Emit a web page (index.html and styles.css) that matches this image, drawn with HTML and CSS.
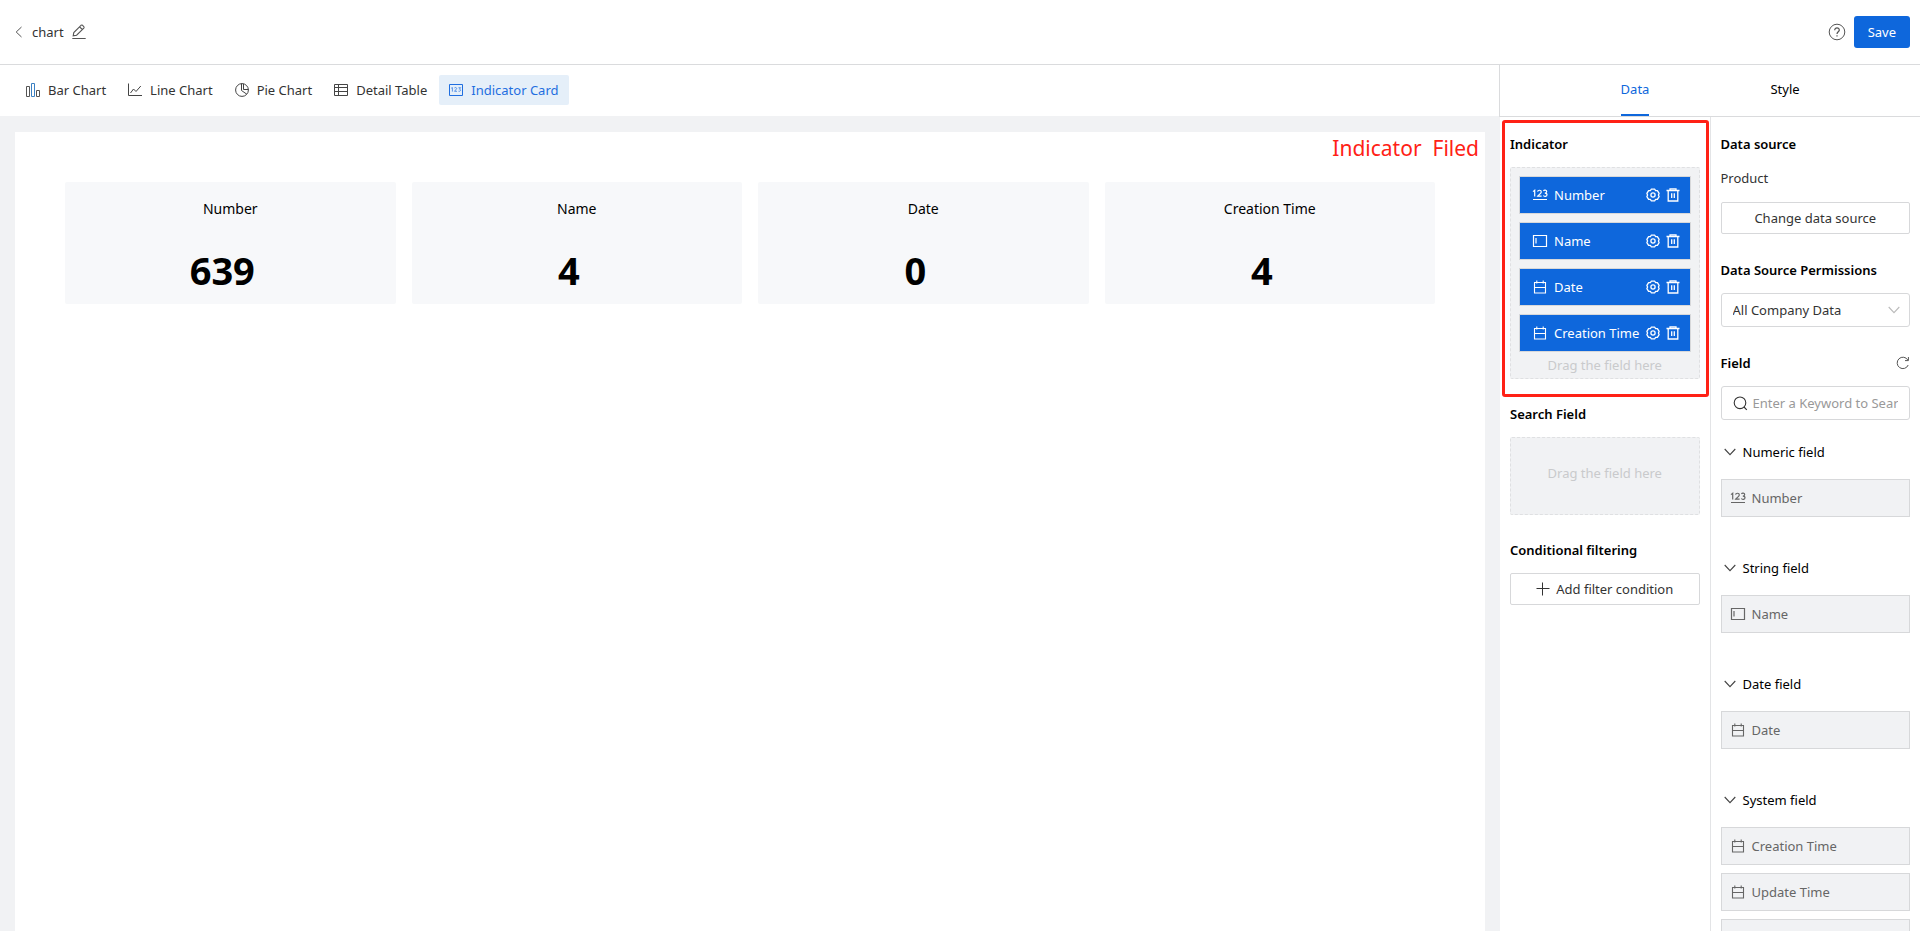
FILE: index.html
```html
<!DOCTYPE html>
<html lang="en">
<head>
    <meta charset="UTF-8">
    <meta name="viewport" content="width=device-width, initial-scale=1.0">
    <title>chart</title>
    <link rel="stylesheet" href="styles.css">
</head>
<body>

    <!-- Shared icons -->
    <svg class="icon-defs" aria-hidden="true">
        <symbol id="icon-number" viewBox="0 0 16 14">
            <path d="M1 3.6 2.7 2.2V8.4M5.6 3.6C5.8 1.8 9.3 1.7 9.3 3.9 9.3 5.4 7 6.4 5.7 8.2H9.6M11.4 2.8C12.2 1.8 14.7 1.9 14.7 3.6 14.7 4.8 13.6 5.1 12.8 5.1 13.8 5.1 15 5.4 15 6.7 15 8.6 12.2 8.8 11.3 7.5" fill="none" stroke="currentColor" stroke-width="1.2"/>
            <path d="M1 11.5H15" stroke="currentColor"/>
        </symbol>
        <symbol id="icon-text" viewBox="0 0 16 14">
            <path d="M1.5 1.5H14.5V12.5H1.5ZM4 4V9.5" fill="none" stroke="currentColor" stroke-width="1.2"/>
        </symbol>
        <symbol id="icon-date" viewBox="0 0 16 14">
            <path d="M2.5 2.5H13.5V13H2.5ZM2.5 7.5H13.5M4.8 .5V3.5M11.2 .5V3.5" fill="none" stroke="currentColor" stroke-width="1.1"/>
        </symbol>
        <symbol id="icon-gear" viewBox="0 0 14 14">
            <path d="M5.2 1.2H8.8L9.6 2.7 11.4 2.6 13.1 5.4 12.4 7 13.1 8.6 11.4 11.4 9.6 11.3 8.8 12.8H5.2L4.4 11.3 2.6 11.4.9 8.6 1.6 7 .9 5.4 2.6 2.6 4.4 2.7Z" fill="none" stroke="currentColor" stroke-width="1.3" stroke-linejoin="round"/>
            <circle cx="7" cy="7" r="2.1" fill="none" stroke="currentColor" stroke-width="1.3"/>
        </symbol>
        <symbol id="icon-trash" viewBox="0 0 14 14">
            <path d="M.5 2.5H13.5M4 2.2V.9H10V2.2M2.2 2.5V13H11.8V2.5M5.7 5.2V10M8.3 5.2V10" fill="none" stroke="currentColor" stroke-width="1.3"/>
        </symbol>
        <symbol id="icon-down" viewBox="0 0 12 12">
            <path d="M.7 3 6 8.6 11.3 3" fill="none" stroke="currentColor" stroke-width="1.1"/>
        </symbol>
    </svg>

    <header class="header">
        <button class="icon-btn back" aria-label="Back">
            <svg width="8" height="12" viewBox="0 0 8 12"><path d="M6.5 1 1.2 6 6.5 11" fill="none" stroke="currentColor"/></svg>
        </button>
        <h1 class="title">chart</h1>
        <button class="icon-btn" aria-label="Rename">
            <svg width="14" height="16" viewBox="0 0 14 16"><path d="M1.2 11.8 1.8 8.5 9 1.3Q9.8.7 10.6 1.3L11.8 2.5Q12.4 3.3 11.8 4.1L4.6 11.2ZM7.6 2.8 10.3 5.5" fill="none" stroke="currentColor" stroke-width="1.1"/><path d="M.3 14.5H13.7" stroke="currentColor"/></svg>
        </button>
        <div class="header-actions">
            <button class="icon-btn" aria-label="Help">
                <svg width="18" height="18" viewBox="0 0 18 18" fill="none" stroke="currentColor"><circle cx="9" cy="9" r="7.8"/><path d="M6.7 7.2C6.7 4.1 11.4 4.3 11.3 7.1 11.2 8.8 9 8.8 9 11M9 12.2V13.5" stroke-width="1.2"/></svg>
            </button>
            <button class="save">Save</button>
        </div>
    </header>

    <div class="workspace">
        <main class="main">
            <nav class="toolbar">
                <button class="tool">
                    <svg width="14" height="14" viewBox="0 0 14 14" fill="none"><path d="M.5 3.5H3.5V13.5H.5Z" stroke="#555"/><path d="M5.5.5H8.5V13.5H5.5Z" stroke="#3c82c4"/><path d="M10.5 7.5H13.5V13.5H10.5Z" stroke="#555"/></svg>
                    Bar Chart
                </button>
                <button class="tool">
                    <svg width="14" height="14" viewBox="0 0 14 14" fill="none" stroke="#444"><path d="M.5.5V12.5H14M2.5 10 5.5 6 8 8.5 12.8 3"/></svg>
                    Line Chart
                </button>
                <button class="tool">
                    <svg width="14" height="14" viewBox="0 0 14 14" fill="none" stroke="#444"><circle cx="7" cy="7" r="6.4"/><path d="M6.5.6V7.5L11.8 11.2M8.5.8V6.5H13.4"/></svg>
                    Pie Chart
                </button>
                <button class="tool">
                    <svg width="14" height="14" viewBox="0 0 14 14" fill="none" stroke="#444"><path d="M.5 1.5H13.5V12.5H.5ZM.5 4.5H13.5M.5 8.5H13.5M4.5 1.5V12.5"/></svg>
                    Detail Table
                </button>
                <button class="tool active">
                    <svg width="14" height="14" viewBox="0 0 14 14" fill="none" stroke="currentColor"><path d="M.5 1.5H13.5V12.5H.5Z"/><path d="M2.2 5.2 3.4 4.6V8.6M5.4 5C6 4.2 7.7 4.4 7.7 5.6L5.5 8.3H8M9.5 4.7H11.7L10.4 6.1C12.3 6.4 11.8 8.8 9.5 8.2" stroke-width=".7"/></svg>
                    Indicator Card
                </button>
            </nav>
            <div class="stage">
                <div class="canvas">
                    <div class="note">Indicator&nbsp; Filed</div>
                    <section class="card">
                        <h2>Number</h2>
                        <p>639</p>
                    </section>
                    <section class="card">
                        <h2>Name</h2>
                        <p>4</p>
                    </section>
                    <section class="card">
                        <h2>Date</h2>
                        <p>0</p>
                    </section>
                    <section class="card">
                        <h2>Creation Time</h2>
                        <p>4</p>
                    </section>
                </div>
            </div>
        </main>

        <aside class="side">
            <div class="tabs">
                <button class="tab active"><span>Data</span></button>
                <button class="tab"><span>Style</span></button>
            </div>
            <div class="columns">
                <div class="column config">
                    <div class="highlight"></div>
                    <h3>Indicator</h3>
                    <div class="dropzone">
                        <div class="field chosen">
                            <svg class="field-icon"><use href="#icon-number"/></svg>
                            <span>Number</span>
                            <button aria-label="Settings"><svg><use href="#icon-gear"/></svg></button>
                            <button aria-label="Delete"><svg><use href="#icon-trash"/></svg></button>
                        </div>
                        <div class="field chosen">
                            <svg class="field-icon"><use href="#icon-text"/></svg>
                            <span>Name</span>
                            <button aria-label="Settings"><svg><use href="#icon-gear"/></svg></button>
                            <button aria-label="Delete"><svg><use href="#icon-trash"/></svg></button>
                        </div>
                        <div class="field chosen">
                            <svg class="field-icon"><use href="#icon-date"/></svg>
                            <span>Date</span>
                            <button aria-label="Settings"><svg><use href="#icon-gear"/></svg></button>
                            <button aria-label="Delete"><svg><use href="#icon-trash"/></svg></button>
                        </div>
                        <div class="field chosen">
                            <svg class="field-icon"><use href="#icon-date"/></svg>
                            <span>Creation Time</span>
                            <button aria-label="Settings"><svg><use href="#icon-gear"/></svg></button>
                            <button aria-label="Delete"><svg><use href="#icon-trash"/></svg></button>
                        </div>
                        <div class="hint">Drag the field here</div>
                    </div>

                    <h3>Search Field</h3>
                    <div class="dropzone empty">
                        <div class="hint">Drag the field here</div>
                    </div>

                    <h3>Conditional filtering</h3>
                    <button class="btn">
                        <svg width="14" height="14" viewBox="0 0 14 14" stroke="currentColor"><path d="M.5 6.5H13.5M6.5.5V13.5"/></svg>
                        Add filter condition
                    </button>
                </div>

                <div class="column source">
                    <h3>Data source</h3>
                    <p class="source-name">Product</p>
                    <button class="btn">Change data source</button>

                    <h3><label for="permission">Data Source Permissions</label></h3>
                    <div class="select">
                        <select id="permission">
                            <option>All Company Data</option>
                        </select>
                        <svg><use href="#icon-down"/></svg>
                    </div>

                    <h3 class="with-action">
                        <label for="keyword">Field</label>
                        <button class="icon-btn" aria-label="Refresh">
                            <svg width="14" height="14" viewBox="0 0 14 14" fill="none" stroke="currentColor"><path d="M12.2 9A5.7 5.7 0 1 1 11.8 4M12.4 1V4.6H9"/></svg>
                        </button>
                    </h3>
                    <div class="search">
                        <svg width="15" height="15" viewBox="0 0 15 15" fill="none" stroke="currentColor" stroke-width="1.1"><circle cx="7" cy="6.8" r="5.8"/><path d="M11 11 13.8 13.8"/></svg>
                        <input id="keyword" type="text" placeholder="Enter a Keyword to Search">
                    </div>

                    <div class="group">
                        <h4><svg><use href="#icon-down"/></svg>Numeric field</h4>
                        <div class="field"><svg class="field-icon"><use href="#icon-number"/></svg><span>Number</span></div>
                    </div>
                    <div class="group">
                        <h4><svg><use href="#icon-down"/></svg>String field</h4>
                        <div class="field"><svg class="field-icon"><use href="#icon-text"/></svg><span>Name</span></div>
                    </div>
                    <div class="group">
                        <h4><svg><use href="#icon-down"/></svg>Date field</h4>
                        <div class="field"><svg class="field-icon"><use href="#icon-date"/></svg><span>Date</span></div>
                    </div>
                    <div class="group">
                        <h4><svg><use href="#icon-down"/></svg>System field</h4>
                        <div class="field"><svg class="field-icon"><use href="#icon-date"/></svg><span>Creation Time</span></div>
                        <div class="field"><svg class="field-icon"><use href="#icon-date"/></svg><span>Update Time</span></div>
                        <div class="field"></div>
                    </div>
                </div>
            </div>
        </aside>
    </div>

</body>
</html>
```

FILE: styles.css
```css
* {
    box-sizing: border-box;
}

body {
    display: flex;
    flex-direction: column;
    height: 100vh;
    margin: 0;
    overflow: hidden;
    background-color: #fff;
    color: #333;
    font-family: "Noto Sans", "Open Sans", sans-serif;
    font-size: 13px;
    line-height: 22px;
}

h1, h2, h3, h4, p {
    margin: 0;
    font-size: 13px;
    font-weight: 400;
}

button, input, select {
    font: inherit;
    color: inherit;
}

button {
    padding: 0;
    border: none;
    background: none;
    cursor: pointer;
}

svg {
    display: block;
    flex-shrink: 0;
}

.icon-defs {
    display: none;
}

.icon-btn {
    color: #555;
}

/* Header */
.header {
    display: flex;
    align-items: center;
    flex-shrink: 0;
    height: 65px;
    padding: 0 10px 0 15px;
    border-bottom: 1px solid #dadbdd;
}

.title {
    margin: 0 8px 0 9px;
}

.header-actions {
    display: flex;
    align-items: center;
    gap: 8px;
    margin-left: auto;
}

.save {
    height: 32px;
    padding: 0 14px;
    border-radius: 3px;
    background-color: #0e67dc;
    color: #fff;
}

.workspace {
    display: flex;
    flex: 1;
    min-height: 0;
}

.main {
    display: flex;
    flex: 1;
    flex-direction: column;
    min-width: 0;
}

/* Chart type toolbar */
.toolbar {
    display: flex;
    align-items: center;
    gap: 2px;
    height: 51px;
    padding: 0 16px 2px;
}

.tool {
    display: flex;
    align-items: center;
    gap: 8px;
    height: 30px;
    padding: 0 10px;
    border-radius: 2px;
}

.tool.active {
    background-color: #e5eff9;
    color: #1f6ee0;
}

/* Canvas */
.stage {
    display: flex;
    flex: 1;
    padding: 16px 15px 0;
    background-color: #f1f2f4;
}

.canvas {
    position: relative;
    display: flex;
    align-items: flex-start;
    flex: 1;
    gap: 16px;
    padding: 50px;
    background-color: #fff;
}

.note {
    position: absolute;
    top: 0;
    right: 6px;
    color: #ff2116;
    font-size: 21px;
    line-height: 32px;
}

.card {
    flex: 1;
    height: 122px;
    padding-top: 16px;
    border-radius: 2px;
    background-color: #f7f8fa;
    color: #000;
    text-align: center;
}

.card h2 {
    font-size: 14px;
}

.card p {
    padding-right: 16px;
    margin-top: 24px;
    font-size: 38px;
    font-weight: 700;
    line-height: 52px;
}

/* Side panel */
.side {
    display: flex;
    flex-direction: column;
    width: 420px;
}

.tabs {
    display: flex;
    justify-content: center;
    flex-shrink: 0;
    height: 52px;
    margin-left: -1px;
    border-bottom: 1px solid #dadbdd;
    border-left: 1px solid #dadbdd;
    color: #000;
}

.tab {
    display: flex;
    justify-content: center;
    width: 150px;
}

.tab span {
    height: 51px;
    line-height: 48px;
}

.tab.active span {
    border-bottom: 2px solid #0e67dc;
    color: #0e67dc;
}

.columns {
    display: flex;
    flex: 1;
    min-height: 0;
}

.column {
    flex: 1;
    padding: 16px 10px 0;
    overflow: hidden;
}

.config {
    position: relative;
}

h3 {
    margin: 24px 0 12px;
    color: #000;
    font-weight: 600;
}

.source {
    border-left: 1px solid #e3e4e6;
}

.source h3 {
    margin-top: 25px;
}

.config .highlight + h3,
.source h3:first-child {
    margin-top: 0;
}

/* Red frame over the indicator section */
.highlight {
    position: absolute;
    top: 3px;
    left: 2px;
    right: 1px;
    height: 277px;
    border: 3px solid #ff2116;
    border-radius: 3px;
    pointer-events: none;
}

.dropzone {
    display: flex;
    flex-direction: column;
    gap: 8px;
    padding: 8px 8px 2px;
    border: 1px dashed #dfe0e2;
    border-radius: 2px;
    background-color: #f1f2f4;
}

.dropzone.empty {
    height: 78px;
    justify-content: center;
    padding: 0 8px 6px;
}

.hint {
    color: #c9cacc;
    text-align: center;
}

.dropzone .field + .hint {
    margin-top: -6px;
}

.field {
    display: flex;
    align-items: center;
    gap: 6px;
    height: 38px;
    padding: 0 8px;
    border: 1px solid #d7d8da;
    background-color: #f1f2f4;
    color: #666;
}

.field span {
    flex: 1;
    white-space: nowrap;
}

.field-icon {
    width: 16px;
    height: 14px;
}

.field.chosen {
    padding: 0 10px 0 12px;
    background-color: #0e67dc;
    color: #fff;
}

.chosen button svg {
    width: 14px;
    height: 14px;
}

.btn {
    display: flex;
    align-items: center;
    justify-content: center;
    gap: 6px;
    width: 100%;
    height: 32px;
    border: 1px solid #d7d8da;
    border-radius: 2px;
}

.source-name {
    margin-bottom: 13px;
}

/* Form controls */
.select {
    position: relative;
}

.select select {
    display: block;
    width: 100%;
    height: 34px;
    padding: 0 11px;
    border: 1px solid #d7d8da;
    border-radius: 3px;
    background-color: #fff;
    appearance: none;
}

.select svg {
    position: absolute;
    top: 11px;
    right: 10px;
    width: 12px;
    height: 12px;
    color: #bbb;
    pointer-events: none;
}

.with-action {
    display: flex;
    align-items: center;
    justify-content: space-between;
}

.search {
    display: flex;
    align-items: center;
    gap: 5px;
    height: 34px;
    padding: 0 11px;
    border: 1px solid #d7d8da;
    border-radius: 3px;
}

.search input {
    flex: 1;
    min-width: 0;
    padding: 0;
    border: none;
    outline: none;
}

.search input::placeholder {
    color: #999;
}

/* Field groups */
.group {
    display: flex;
    flex-direction: column;
    gap: 8px;
    margin-bottom: 40px;
}

.search + .group {
    margin-top: 21px;
}

.group h4 {
    display: flex;
    align-items: center;
    gap: 7px;
    margin-bottom: 8px;
    padding-left: 3px;
    color: #000;
}

.group h4 svg {
    width: 12px;
    height: 12px;
    color: #444;
}
```
